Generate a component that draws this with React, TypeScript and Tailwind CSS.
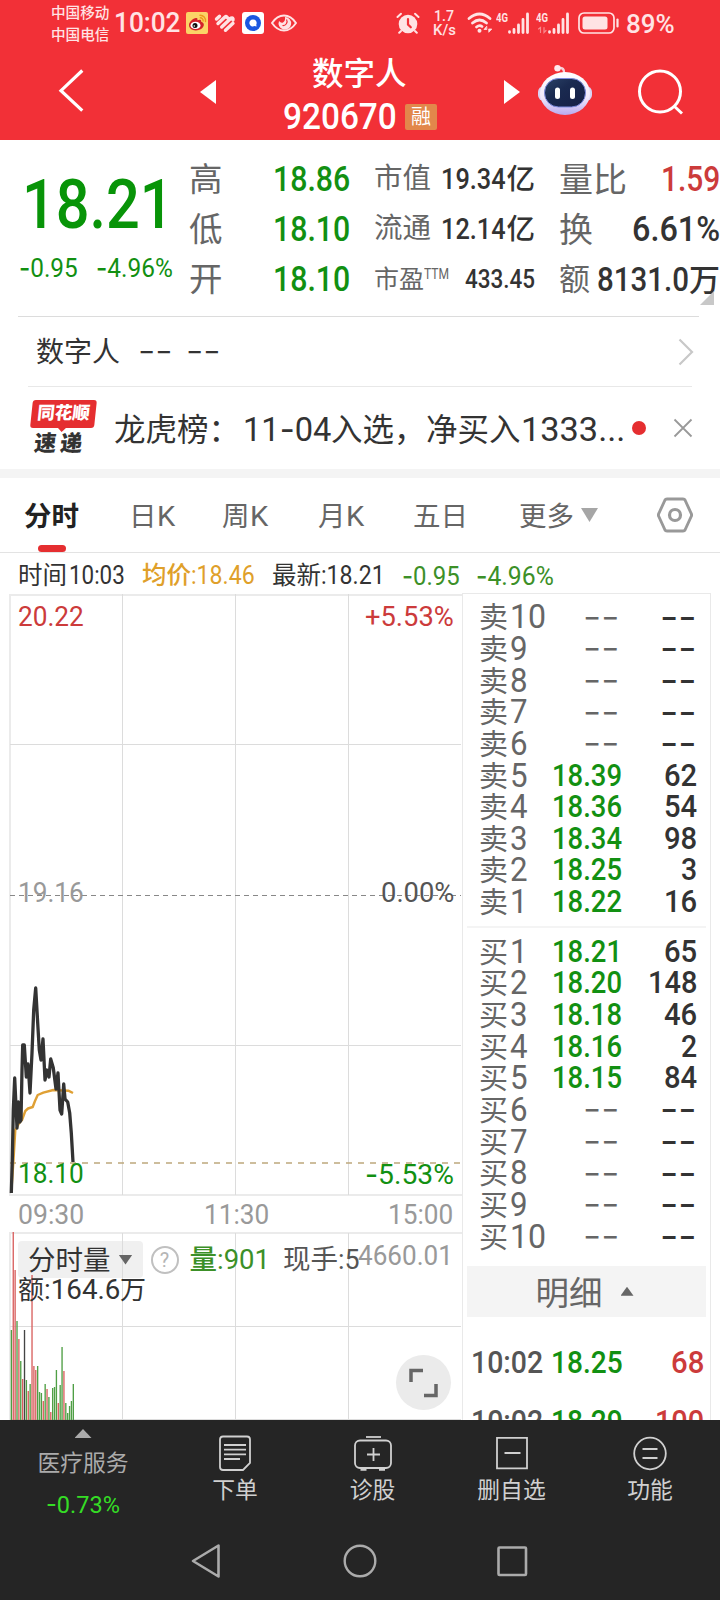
import React, { useLayoutEffect, useRef, useState } from 'react'
import clsx from 'clsx'

// Squeezes a number into the given width, the digits are meant to look like a narrow DIN
function Num({ t, w, className }: { t: string; w: number; className?: string }) {
  const ref = useRef<HTMLSpanElement>(null)
  const [scale, setScale] = useState(1)

  useLayoutEffect(() => {
    if (ref.current) setScale(w / ref.current.offsetWidth)
  }, [t, w])

  return (
    <span className={clsx('inline-block shrink-0 whitespace-nowrap text-left leading-none', className)} style={{ width: w }}>
      <span
        ref={ref}
        className={clsx('inline-block origin-left', t.includes('-') && "font-['Inter_Dash',Inter]")}
        style={{ transform: `scaleX(${scale})` }}
      >
        {t.includes('-')
          ? t.split(/(-+)/).filter(Boolean).map((part, i) => (
              <span key={i} className={part.startsWith('-') ? 'font-[Inter]' : 'font-[Roboto]'}>{part}</span>
            ))
          : t}
      </span>
    </span>
  )
}

function Signal({ dim }: { dim?: boolean }) {
  return (
    <div className="relative h-[22px] w-[34px] shrink-0 text-[#ffe3e4]">
      <svg viewBox="0 0 34 22" className="h-[22px] w-[34px]" stroke="currentColor" strokeWidth="2.8" strokeLinecap="round">
        <path d="M13.5 19.7v.6M18 17.5v3M22.5 13v7.5M27 7.5v13M31.5 2v18.5" />
        <path d="M4.5 20.5v-5l-2 1.5M8 15.500v5l2-2" strokeWidth="1.200" fill="none" opacity={dim ? 0.5 : 0} />
      </svg>
      <Num t="4G" w={12} className="absolute left-0 top-[-1px] text-[13.500px] font-bold" />
    </div>
  )
}

function StatusBar() {
  return (
    <div className="flex h-[46px] items-center pl-[51px] text-[#ffe3e4]">
      <div className="w-[60px] pt-px text-[14.6px] font-medium leading-[22px]">
        <div>中国移动</div>
        <div>中国电信</div>
      </div>
      <Num t="10:02" w={67} className="ml-[3px] text-[27px] font-medium" />
      <svg viewBox="0 0 22 22" className="ml-[5px] size-[22px] shrink-0">
        <rect width="22" height="22" rx="2" fill="#fbd367" />
        <path d="M3 13c0-3 4-7 7-7 2 0 1.500 1.500 1.300 2.200 2-.8 4.300-.8 3.900 1.500 1.500.5 3 1.400 2.600 3.500-.5 3-4 5.200-8 5.200S3 16.200 3 13z" fill="#d3212a" />
        <ellipse cx="9.500" cy="13.400" rx="5" ry="3.700" fill="#fff" />
        <circle cx="9" cy="13.600" r="2.500" fill="#111" />
        <circle cx="8.300" cy="14" r=".8" fill="#fff" />
        <path d="M14 3.200a5.500 5.500 0 0 1 5.500 6.300M14.300 5.800a3 3 0 0 1 2.800 3.200" fill="none" stroke="#ee9a1c" strokeWidth="1.400" strokeLinecap="round" />
      </svg>
      <svg viewBox="0 0 22 20" className="ml-[6px] h-[20px] w-[22px] shrink-0" fill="none" stroke="currentColor" strokeWidth="3.400" strokeLinecap="round" strokeLinejoin="round">
        <path d="M2.500 6 5.500 3.200M4 10.500 11 4q1-.8 2 .2L15.500 6.500M7.700 14 17 5.200q2.500-1 2 1.800M11.500 17.300 19 10.300" />
      </svg>
      <svg viewBox="0 0 22 22" className="ml-[6px] size-[22px] shrink-0">
        <rect width="22" height="22" rx="3" fill="#fff" />
        <circle cx="11" cy="11" r="8" fill="#1b57e0" />
        <path d="M11 7.500a3.500 3.500 0 1 0 1.500 6.600l2 .4-.2-2A3.500 3.500 0 0 0 11 7.500z" fill="#fff" />
      </svg>
      <svg viewBox="0 0 26 20" className="ml-[7px] h-[20px] w-[26px] shrink-0" fill="none" stroke="currentColor" strokeWidth="1.900">
        <path d="M1 10Q6 2.500 13 2.500t12 7.500q-5 7.500-12 7.500T1 10z" />
        <path d="M14 4a6.300 6.300 0 1 1-6 4q2 2.500 4 1.500 2.500-1.500 2-5.500z" fill="currentColor" stroke="none" />
        <path d="M15.500 6.500a4 4 0 0 1-4 6" stroke="#f23037" strokeWidth="1.200" />
      </svg>

      <svg viewBox="0 0 24 22" className="ml-[99px] h-[22px] w-[24px] shrink-0" fill="none" stroke="currentColor" strokeWidth="2" strokeLinecap="round">
        <circle cx="12" cy="12" r="9.300" fill="currentColor" stroke="none" />
        <path d="M1.500 5 5 1.800M22.500 5 19 1.800M5 19l-1.800 1.800M19 19l1.800 1.800" />
        <path d="M12 7v5.500l2.800 2.800" stroke="#f23037" strokeWidth="2.200" />
      </svg>
      <div className="ml-[12px] flex w-[24px] flex-col items-center text-[15.500px] font-medium">
        <Num t="1.7" w={20} className="h-[14px]" />
        <Num t="K/s" w={23} className="h-[15px]" />
      </div>
      <svg viewBox="0 0 26 22" className="ml-[11px] h-[22px] w-[26px] shrink-0" fill="none" stroke="currentColor" strokeWidth="2.700" strokeLinecap="round">
        <path d="M2 6.500q10.500-9 21 0M5.500 11q7-6 14 0M9.500 15q3-2.500 5.500-.5" />
        <circle cx="12.500" cy="18.800" r="2" fill="currentColor" stroke="none" />
        <path d="m19.500 14.500-2.500 3h2.500zM22 20l2.800-3H22z" fill="currentColor" strokeWidth=".8" />
      </svg>
      <div className="ml-[3px] flex gap-[6px]">
        <Signal />
        <Signal dim />
      </div>
      <svg viewBox="0 0 42 22" className="ml-[8px] h-[22px] w-[42px] shrink-0" fill="none" stroke="currentColor">
        <rect x="1" y="1" width="35" height="20" rx="5" strokeWidth="1.700" />
        <rect x="4.500" y="4.500" width="25" height="13" rx="2.500" fill="currentColor" stroke="none" />
        <path d="M39.500 7.500v7" strokeWidth="2.200" strokeLinecap="round" />
      </svg>
      <Num t="89%" w={49} className="ml-[6px] mt-[2px] text-[26px] font-medium" />
    </div>
  )
}

function Header() {
  return (
    <header className="h-[140px] bg-[#f23037] text-white">
      <StatusBar />
      <div className="flex h-[94px] items-start">
        <svg viewBox="0 0 26 44" className="ml-[58px] mt-[23px] h-[44px] w-[26px]" fill="none" stroke="#fff" strokeWidth="3.200">
          <path d="M24.300 1.500 3 21.700l21.300 20" />
        </svg>
        <svg viewBox="0 0 16 24" className="ml-[116px] mt-[34px] h-[24px] w-[16px]" fill="#fff">
          <path d="M16 0v24L0 12z" />
        </svg>
        <div className="ml-[67px] w-[155px]">
          <div className="h-[57px] pl-[29px] text-[31.500px] font-medium leading-[58px]">数字人</div>
          <div className="flex h-[28px] items-center">
            <Num t="920670" w={114} className="text-[36px] font-medium" />
            <span className="ml-[8px] flex h-[26px] w-[32px] items-center justify-center rounded-[2px] bg-[#e2874b] text-[20px] leading-none">融</span>
          </div>
        </div>
        <svg viewBox="0 0 16 24" className="ml-[66px] mt-[34px] h-[24px] w-[16px]" fill="#fff">
          <path d="M0 0v24l16-12z" />
        </svg>
        <svg viewBox="0 0 54 52" className="ml-[18px] mt-[18px] h-[52px] w-[54px]">
          <defs>
            <linearGradient id="shell" x1="0" y1="0" x2="0" y2="1">
              <stop offset="0" stopColor="#fff" />
              <stop offset=".6" stopColor="#f0e8fb" />
              <stop offset="1" stopColor="#b9a9ef" />
            </linearGradient>
            <linearGradient id="face" x1="0" y1="0" x2="1" y2="1">
              <stop offset="0" stopColor="#2b4267" />
              <stop offset=".4" stopColor="#1a2a50" />
              <stop offset="1" stopColor="#161f46" />
            </linearGradient>
          </defs>
          <path d="M20 4q7-1 6 6" fill="none" stroke="#f6cfd8" strokeWidth="2.500" />
          <circle cx="19.500" cy="4.200" r="3.200" fill="#ffe9ee" />
          <rect x="0" y="22" width="54" height="15" rx="6" fill="#d9d3f5" />
          <ellipse cx="27" cy="29.500" rx="25" ry="21.500" fill="url(#shell)" />
          <rect x="6.500" y="14.500" width="41" height="28.500" rx="14" fill="url(#face)" stroke="#7d8be0" strokeWidth="1" />
          <rect x="17" y="23.500" width="5" height="11.500" rx="2.500" fill="#fff" />
          <rect x="32" y="23.500" width="5" height="11.500" rx="2.500" fill="#fff" />
        </svg>
        <svg viewBox="0 0 46 46" className="ml-[46px] mt-[23px] size-[46px]" fill="none" stroke="#fff" strokeWidth="3">
          <circle cx="22" cy="22.500" r="20.500" />
          <path d="m36 37 8 7.500" />
        </svg>
      </div>
    </header>
  )
}

function Quote() {
  return (
    <section className="relative flex h-[176px] pt-[14px] text-[#666]">
      <div className="w-[189px] text-[#129012]">
        <div className="flex h-[101px] items-center pl-[22px]">
          <Num t="18.21" w={152} className="text-[68px] font-medium text-[#089408]" />
        </div>
        <div className="flex h-[26px] items-center pl-[19px] text-[26px] font-[450]">
          <Num t="-0.95" w={59} />
          <Num t="-4.96%" w={77} className="ml-[18px]" />
        </div>
      </div>
      <div className="w-[161px] text-[33.500px]">
        {[['高', '18.86'], ['低', '18.10'], ['开', '18.10']].map(([label, value]) => (
          <div key={label} className="flex h-[50px] items-center justify-between leading-none">
            <span className="pt-[2px]">{label}</span>
            <Num t={value} w={77} className="text-[35px] font-medium text-[#129012]" />
          </div>
        ))}
      </div>
      <div className="ml-[24px] w-[161px] text-[#333]">
        <div className="flex h-[50px] items-center justify-between pt-px text-[28.500px] leading-none">
          <span className="text-[#666]">市值</span>
          <span className="font-medium"><Num t="19.34" w={65} className="text-[30px]" />亿</span>
        </div>
        <div className="flex h-[50px] items-center justify-between pt-px text-[28.500px] leading-none">
          <span className="text-[#666]">流通</span>
          <span className="font-medium"><Num t="12.14" w={65} className="text-[30px]" />亿</span>
        </div>
        <div className="flex h-[50px] items-center justify-between text-[25px] leading-none">
          <span className="flex items-start text-[#666]">市盈<Num t="TTM" w={25} className="text-[15px]" /></span>
          <Num t="433.45" w={70} className="text-[26px] font-medium" />
        </div>
      </div>
      <div className="ml-[24px] w-[161px] text-[34px] text-[#333]">
        <div className="flex h-[50px] items-center justify-between leading-none">
          <span className="pt-[2px] text-[#666]">量比</span>
          <Num t="1.59" w={59} className="text-[35px] font-medium text-[#cc3b3b]" />
        </div>
        <div className="flex h-[50px] items-center justify-between leading-none">
          <span className="pt-[2px] text-[#666]">换</span>
          <Num t="6.61%" w={88} className="text-[35px] font-medium" />
        </div>
        <div className="flex h-[50px] items-center justify-between text-[31px] leading-none">
          <span className="text-[#666]">额</span>
          <span className="flex items-baseline font-medium"><Num t="8131.0" w={92} className="text-[33px]" />万</span>
        </div>
      </div>
      <div className="absolute right-[6px] top-[151px] size-[14px] bg-[#c8c8c8] [clip-path:polygon(100%_0,100%_100%,0_100%)]" />
    </section>
  )
}

function News() {
  return (
    <section>
      <div className="ml-[18px] mr-[21px] h-px bg-[#dcdcdc]" />
      <div className="flex h-[69px] items-center pl-[36px] pr-[26px] text-[28px] text-[#333]">
        <span className="pt-[3px] leading-none">数字人</span>
        <Num t="--" w={35} className="ml-[18px] text-[28px]" />
        <Num t="--" w={35} className="ml-[13px] text-[28px]" />
        <svg viewBox="0 0 16 28" className="ml-auto h-[28px] w-[16px]" fill="none" stroke="#c8c8c8" strokeWidth="2.200">
          <path d="m1.500 1.500 12.500 12.500L1.500 26.500" />
        </svg>
      </div>
      <div className="ml-[28px] mr-[28px] h-px bg-[#e8e8e8]" />
      <div className="flex h-[82px] items-center pl-[30px] pr-[27px] text-[#333]">
        <div className="relative w-[64px] shrink-0 -skew-x-[6deg] leading-none">
          <div className="flex h-[28px] items-center justify-center rounded-[3px] bg-[#e52e30] text-[17.500px] font-black text-white">同花顺</div>
          <div className="absolute left-[28px] top-[28px] h-[4px] w-[8px] bg-[#e52e30] [clip-path:polygon(0_0,100%_0,50%_100%)]" />
          <div className="mt-[5px] flex h-[23px] justify-center gap-[4px] pr-[4px] text-[22px] font-black"><span>速</span><span>递</span></div>
        </div>
        <div className="ml-[20px] flex items-baseline whitespace-nowrap pt-[4px] text-[31.500px] leading-none">
          <span className="w-[129px]">龙虎榜：</span>
          <Num t="11-04" w={88} className="text-[33px]" />
          <span className="w-[95px]">入选，</span>
          <span className="w-[95px]">净买入</span>
          <Num t="1333..." w={104} className="text-[33px]" />
        </div>
        <div className="ml-[7px] size-[14px] shrink-0 rounded-full bg-[#e52e30]" />
        <svg viewBox="0 0 20 20" className="ml-auto size-[20px] shrink-0" stroke="#999" strokeWidth="1.800">
          <path d="m1.500 1.500 17 17M18.500 1.500l-17 17" />
        </svg>
      </div>
      <div className="h-[9px] bg-[#f4f4f4]" />
    </section>
  )
}

function Tabs() {
  return (
    <nav className="relative flex h-[75px] items-center border-b border-[#e3e3e3] pl-[24px] text-[27.500px] leading-none text-[#666]">
      <span className="w-[105px] pt-[4px] font-bold text-[#222]">分时</span>
      <span className="w-[93px] pt-[4px]">日<Num t="K" w={18} /></span>
      <span className="w-[96px] pt-[4px]">周<Num t="K" w={18} /></span>
      <span className="w-[95px] pt-[4px]">月<Num t="K" w={18} /></span>
      <span className="w-[106px] pt-[4px]">五日</span>
      <span className="pt-[4px]">更多</span>
      <div className="ml-[7px] h-[14px] w-[17px] bg-[#a6a6a6] [clip-path:polygon(0_0,100%_0,50%_100%)]" />
      <svg viewBox="0 0 36 36" className="ml-auto mr-[27px] size-[36px]" fill="none" stroke="#999" strokeLinejoin="round">
        <path d="M10 2h16q1.500 0 2 1l6.200 13.500q.8 1.500 0 3L28 33q-.5 1-2 1H10q-1.500 0-2-1L1.800 19.500q-.8-1.500 0-3L8 3q.5-1 2-1z" strokeWidth="2.900" />
        <circle cx="18" cy="18" r="5.500" strokeWidth="3.200" />
      </svg>
      <div className="absolute left-[38px] top-[67px] h-[7px] w-[28px] rounded-full bg-[#e52e30]" />
    </nav>
  )
}

// page coordinates of the minute line, one x step is about 1.9px
const PRICE = '11.3,1193 12.3,1160 13.3,1110 14.7,1078 17,1128 18.3,1102 19.7,1122 21,1120 22,1070 22.7,1045 24.3,1045 26.3,1077 28,1064 30,1093 32,1053 33.7,1010 35.7,988 37.7,1023 39.3,1050 41,1060 43,1039 45,1080 47,1070 49,1077 50.7,1059 53.3,1068 56,1089 58,1073 60,1110 61.7,1114 63.7,1084 65,1099 67.7,1102 69.7,1113 71.3,1133 73,1162'
const AVG = '11.3,1192 13.3,1163 15.3,1130 19.3,1123 22,1120 25.3,1111 28,1108.500 32.7,1107 35,1101 37.7,1095 43.3,1092.700 53.3,1090 68.3,1090.700 73,1093'

function PriceChart() {
  return (
    <div className="relative h-[604px] text-[27px] font-[450]">
      <svg viewBox="0 593 462 604" className="h-[604px] w-[462px]" fill="none">
        <path d="M10 595H462M10 1195H462M10 594V1196" stroke="#ebebeb" strokeWidth="2" />
        <path d="M122.500 594V1195M235.500 594V1195M348.500 594V1195M10 744.500H461M10 1045.500H461" stroke="#dcdcdc" />
        <path d="M10 895.500H461" stroke="#888" strokeDasharray="5 4" />
        <path d="M10 1163H461" stroke="#bda87c" strokeWidth="1.700" strokeDasharray="6 6" />
        <polyline points={AVG} stroke="#dfa035" strokeWidth="2.400" strokeLinejoin="round" />
        <polyline points={PRICE} stroke="#333" strokeWidth="3.300" strokeLinejoin="round" />
      </svg>
      <Num t="20.22" w={66} className="absolute left-[18px] top-[11px] text-[#cc3b3b]" />
      <Num t="+5.53%" w={89} className="absolute right-[8px] top-[11px] text-[#cc3b3b]" />
      <Num t="19.16" w={66} className="absolute left-[18px] top-[287px] text-[#999]" />
      <Num t="0.00%" w={73} className="absolute right-[8px] top-[287px] text-[#555]" />
      <Num t="18.10" w={66} className="absolute left-[18px] top-[568px] text-[#129012]" />
      <Num t="-5.53%" w={89} className="absolute right-[8px] top-[568px] text-[#129012]" />
    </div>
  )
}

// r = up, g = down, k = flat
const VOLUME: [number, string][] = [
  [90, 'g'], [188, 'r'], [150, 'r'], [99, 'g'], [81, 'r'], [59, 'g'], [41, 'r'], [90, 'k'], [40, 'g'], [29, 'r'],
  [36, 'g'], [145, 'r'], [54, 'r'], [50, 'r'], [54, 'g'], [28, 'g'], [27, 'g'], [19, 'r'], [36, 'g'], [31, 'r'],
  [23, 'g'], [8, 'r'], [32, 'g'], [33, 'g'], [50, 'g'], [17, 'r'], [35, 'g'], [73, 'g'], [49, 'r'], [17, 'g'],
  [7, 'g'], [14, 'g'], [19, 'g'], [36, 'g'],
]
const VOLUME_COLOR: Record<string, string> = { r: '#d9605f', g: '#4f9f45', k: '#444' }

function VolumeChart() {
  return (
    <div className="relative h-[188px] leading-none text-[#333]">
      <div className="absolute left-[18px] top-[9px] h-[37px] w-[125px] rounded-[4px] bg-[#f0f0f0]" />
      <svg viewBox="0 1232 462 188" className="relative h-[188px] w-[462px]" fill="none">
        <path d="M10 1233H462M10 1232V1420" stroke="#ebebeb" strokeWidth="2" />
        <path d="M122.500 1233V1420M235.500 1233V1420M348.500 1233V1420M10 1326.500H461M10 1419.500H461" stroke="#dcdcdc" />
        {VOLUME.map(([h, c], i) => (
          <rect key={i} x={10.700 + i * 1.877} y={1420 - h} width="1.350" height={h} fill={VOLUME_COLOR[c]} />
        ))}
      </svg>
      <div className="absolute left-0 top-[9px] flex h-[37px] w-full items-center text-[27.500px]">
        <span className="ml-[28px] pt-[3px]">分时量</span>
        <div className="ml-[8px] h-[10px] w-[14px] bg-[#666] [clip-path:polygon(0_0,100%_0,50%_100%)]" />
        <div className="ml-[18px] flex size-[28px] items-center justify-center rounded-full border-2 border-[#c0c0c0] text-[20px] text-[#b5b5b5]">?</div>
        <span className="ml-[11px] flex items-baseline pt-px font-medium text-[#3c9028]">量<Num t=":901" w={53} className="text-[28px] font-[450]" /></span>
        <span className="ml-[13px] flex items-baseline pt-px text-[#555]">现手<Num t=":5" w={22} className="text-[28px] font-[450]" /></span>
      </div>
      <Num t="4660.01" w={95} className="absolute right-[9px] top-[10px] text-[28px] font-[450] text-[#999]" />
      <div className="absolute left-[18px] top-[45px] flex items-baseline text-[26px]">
        额<Num t=":164.6" w={76} className="text-[27px] font-[450]" />万
      </div>
      <div className="absolute left-[396px] top-[123px] size-[55px] rounded-full bg-[#ebebeb]">
        <svg viewBox="0 0 55 55" className="size-[55px]" fill="none" stroke="#666" strokeWidth="3.500">
          <path d="M15 27V15.500h12M40 29v11.500H28" />
        </svg>
      </div>
    </div>
  )
}

const ASKS = [['10'], ['9'], ['8'], ['7'], ['6'], ['5', '18.39', '62'], ['4', '18.36', '54'], ['3', '18.34', '98'], ['2', '18.25', '3'], ['1', '18.22', '16']]
const BIDS = [['1', '18.21', '65'], ['2', '18.20', '148'], ['3', '18.18', '46'], ['4', '18.16', '2'], ['5', '18.15', '84'], ['6'], ['7'], ['8'], ['9'], ['10']]

function OrderRows({ side, rows }: { side: string; rows: string[][] }) {
  return (
    <div>
      {rows.map(([level, price, volume]) => (
        <div key={level} className="flex h-[31.650px] items-center pl-[16px] pr-[13px] text-[31px] font-[470] leading-none text-[#333]">
          <span className="flex w-[70px] items-baseline text-[29px] font-normal text-[#666]">
            {side}<Num t={level} w={level.length * 18} className="ml-[2px] text-[33px]" />
          </span>
          {price ? (
            <Num t={price} w={70} className="ml-[3px] text-[#129012]" />
          ) : (
            <Num t="--" w={37} className="ml-[34px] font-normal text-[#666]" />
          )}
          {volume ? (
            <Num t={volume} w={volume.length * 16.500} className="ml-auto" />
          ) : (
            <Num t="--" w={37} className="ml-auto" />
          )}
        </div>
      ))}
    </div>
  )
}

function OrderBook() {
  return (
    <div className="h-[827px] w-[249px] overflow-hidden border-x border-t border-[#e9e9e9] pt-[7px]">
      <OrderRows side="卖" rows={ASKS} />
      <div className="mx-[4px] mb-[7px] mt-[9px] h-[2px] bg-[#f4f4f4]" />
      <OrderRows side="买" rows={BIDS} />
      <div className="mx-[4px] mt-[14px] flex h-[51px] items-center justify-center bg-[#f4f4f4] text-[33.500px] leading-none text-[#666]">
        <span className="pt-[4px]">明细</span>
        <div className="ml-[18px] mr-[4px] h-[9px] w-[13px] bg-[#666] [clip-path:polygon(50%_0,100%_100%,0_100%)]" />
      </div>
      <div className="pt-[15px]">
        {[['18.25', '68'], ['18.29', '100']].map(([price, volume]) => (
          <div key={price} className="flex h-[59.500px] items-center pl-[8px] pr-[6px] text-[32px] font-[470]">
            <Num t="10:02" w={72} className="text-[#555]" />
            <Num t={price} w={72} className="ml-[8px] text-[#129012]" />
            <Num t={volume} w={volume.length * 16.500} className="ml-auto text-[#cc3b3b]" />
          </div>
        ))}
      </div>
    </div>
  )
}

function Minute() {
  return (
    <section className="h-[867px] overflow-hidden">
      <div className="flex h-[40px] items-center pt-[5px] text-[24.500px] leading-none text-[#333]">
        <span className="ml-[18px] flex w-[124px] items-baseline">时间<Num t="10:03" w={56} className="ml-[2px] text-[26px] font-[450]" /></span>
        <span className="flex w-[130px] items-baseline font-medium text-[#dfa02a]">均价<Num t=":18.46" w={64} className="text-[26px] font-[450]" /></span>
        <span className="flex w-[130px] items-baseline">最新<Num t=":18.21" w={64} className="text-[26px] font-[450]" /></span>
        <Num t="-0.95" w={58} className="text-[26px] font-[450] text-[#3c9028]" />
        <Num t="-4.96%" w={78} className="ml-[16px] text-[26px] font-[450] text-[#3c9028]" />
      </div>
      <div className="flex">
        <div className="w-[462px] shrink-0">
          <PriceChart />
          <div className="flex h-[35px] items-center pl-[18px] pt-[2px] text-[27px] font-[450] text-[#999]">
            <Num t="09:30" w={66} />
            <Num t="11:30" w={65} className="ml-[120px]" />
            <Num t="15:00" w={65} className="ml-[119px]" />
          </div>
          <VolumeChart />
        </div>
        <OrderBook />
      </div>
    </section>
  )
}

function BottomBar() {
  return (
    <footer className="h-[180px] bg-[#252525] text-[#d0d0d0]">
      <div className="flex h-[100px] text-[22.800px] leading-none">
        <div className="flex w-[166px] flex-col items-center pt-[9px] text-[#ababab]">
          <div className="h-[9px] w-[17px] bg-[#ababab] [clip-path:polygon(50%_0,100%_100%,0_100%)]" />
          <div className="mt-[15px] h-[23px]">医疗服务</div>
          <Num t="-0.73%" w={74} className="mt-[16px] text-[24.500px] text-[#35dd25]" />
        </div>
        <div className="flex w-[138px] flex-col items-center pt-[15px]">
          <svg viewBox="0 0 32 36" className="h-[36px] w-[32px]" fill="none" stroke="currentColor" strokeWidth="1.800">
            <path d="M4 1.500h24q3 0 3 3V28l-7 7H4q-3 0-3-3V4.500q0-3 3-3z" />
            <path d="M5 10h22M5 14.700h22M5 19.300h22M5 24h16" strokeWidth="1.800" />
          </svg>
          <span className="mt-[9px]">下单</span>
        </div>
        <div className="flex w-[137px] flex-col items-center pt-[15px]">
          <svg viewBox="0 0 38 36" className="h-[36px] w-[38px]" fill="none" stroke="currentColor" strokeWidth="1.800">
            <path d="M12 2h15" />
            <rect x="1" y="5.500" width="36" height="27.500" rx="5" />
            <path d="M13 19.500h13M19.500 13v13" />
            <path d="M6.500 34.500h6M25 34.500h6" strokeWidth="2.500" />
          </svg>
          <span className="mt-[9px]">诊股</span>
        </div>
        <div className="flex w-[141px] flex-col items-center pt-[15px]">
          <svg viewBox="0 0 32 36" className="h-[36px] w-[32px]" fill="none" stroke="currentColor" strokeWidth="1.800">
            <path d="M1 2.800h30v30.500H1zM8.500 18h16" />
          </svg>
          <span className="mt-[9px]">删自选</span>
        </div>
        <div className="flex w-[136px] flex-col items-center pt-[15px]">
          <svg viewBox="0 0 34 36" className="h-[36px] w-[34px]" fill="none" stroke="currentColor" strokeWidth="1.800">
            <circle cx="17" cy="18.500" r="15.800" />
            <path d="M9.500 14h15M9.500 23h15" />
          </svg>
          <span className="mt-[9px]">功能</span>
        </div>
      </div>
      <div className="flex h-[80px] items-start pl-[191px] pt-[23px]">
        <svg viewBox="0 0 30 36" className="h-[36px] w-[30px]" fill="none" stroke="#ababab" strokeWidth="2.600" strokeLinejoin="round">
          <path d="M27.500 2.500v31L2 18z" />
        </svg>
        <svg viewBox="0 0 36 36" className="ml-[121px] size-[36px]" fill="none" stroke="#ababab" strokeWidth="2.400">
          <circle cx="18" cy="18" r="15.300" />
        </svg>
        <svg viewBox="0 0 36 36" className="ml-[116px] size-[36px]" fill="none" stroke="#ababab" strokeWidth="2.600">
          <rect x="4.500" y="4.500" width="27.500" height="27.500" rx="1" />
        </svg>
      </div>
    </footer>
  )
}

export default function App() {
  return (
    <div className="h-[1600px] w-[720px] overflow-hidden bg-white font-[Roboto,'Noto_Sans_CJK_SC',sans-serif]">
      <Header />
      <Quote />
      <News />
      <Tabs />
      <Minute />
      <BottomBar />
    </div>
  )
}
